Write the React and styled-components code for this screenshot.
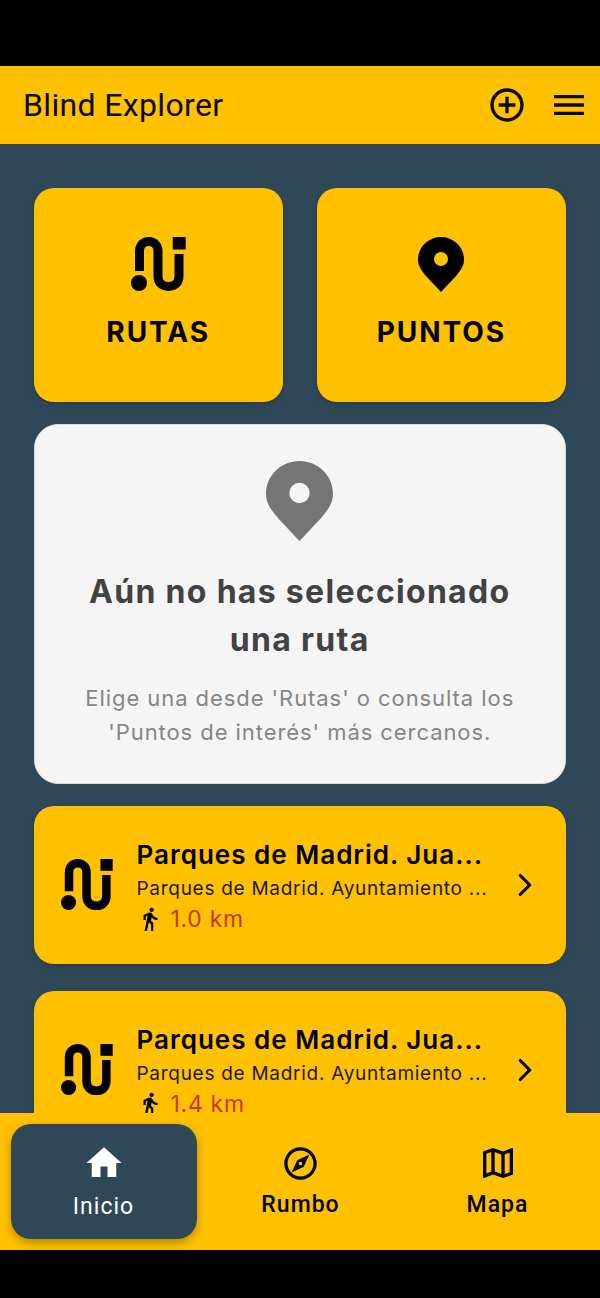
import React from "react";
import styled, { createGlobalStyle } from "styled-components";
import {
  MdOutlineAddCircleOutline,
  MdMenu,
  MdHome,
  MdOutlineExplore,
  MdOutlineMap,
  MdDirectionsWalk,
} from "react-icons/md";
import { LuChevronRight } from "react-icons/lu";

const AMBER = "#ffc100";
const SLATE = "#2f4858";

const GlobalStyle = createGlobalStyle`
  html, body { margin: 0; padding: 0; background: #000; }
  * { box-sizing: border-box; }
`;

const Screen = styled.div`
  width: 600px;
  height: 1298px;
  padding: 66px 0 48px;
  display: flex;
  flex-direction: column;
  background: #000;
  font-family: Inter, "Liberation Sans", sans-serif;
`;

const AppBar = styled.header`
  height: 78px;
  flex: none;
  display: flex;
  align-items: center;
  padding: 0 11px 0 23px;
  background: ${AMBER};
  color: #0a0a0a;
`;

const AppTitle = styled.h1`
  flex: 1;
  margin: 0;
  font-family: Roboto, sans-serif;
  font-size: 32px;
  font-weight: 400;
  letter-spacing: 0.35px;
`;

const BarActions = styled.div`
  display: flex;
  align-items: center;
  gap: 22px;
  font-size: 0;
`;

const Main = styled.main`
  flex: 1;
  min-height: 0;
  overflow: hidden;
  display: flex;
  flex-direction: column;
  padding: 44px 34px 0 33.5px;
  background: ${SLATE};
`;

const TileRow = styled.div`
  display: grid;
  grid-template-columns: 1fr 1fr;
  gap: 34px;
  flex: none;
`;

const Tile = styled.button`
  height: 214px;
  border: 0;
  border-radius: 20px;
  padding: 49px 0 0;
  display: flex;
  flex-direction: column;
  align-items: center;
  gap: 24px;
  background: ${AMBER};
  color: #000;
  box-shadow: 0 2px 5px rgba(0, 0, 0, 0.2);
  font-family: inherit;
`;

const TileLabel = styled.span`
  font-size: 28px;
  line-height: 33px;
  font-weight: 700;
  letter-spacing: 1.95px;
`;

const EmptyCard = styled.section`
  flex: none;
  height: 360px;
  margin-top: 22px;
  padding: 36px 30px 0;
  display: flex;
  flex-direction: column;
  align-items: center;
  border-radius: 24px;
  border: 1px solid #d9dadb;
  background: #f5f5f5;
  text-align: center;
`;

const EmptyTitle = styled.h2`
  margin: 27px 0 0;
  font-size: 32px;
  line-height: 48px;
  font-weight: 700;
  letter-spacing: 1.3px;
  color: #424242;
`;

const EmptyText = styled.p`
  margin: 18px 0 0;
  font-size: 22px;
  line-height: 33.5px;
  letter-spacing: 0.93px;
  color: #858585;
`;

const RouteList = styled.div`
  flex: none;
  display: flex;
  flex-direction: column;
  gap: 27px;
  margin-top: 22px;
`;

const RouteCard = styled.article`
  height: 158px;
  display: flex;
  align-items: center;
  padding: 0 22px 0 27.5px;
  border-radius: 20px;
  background: ${AMBER};
  color: #000;
  box-shadow: 0 2px 5px rgba(0, 0, 0, 0.2);
`;

const RouteBody = styled.div`
  flex: 1;
  min-width: 0;
  margin: 0 22px 0 23.5px;
`;

const RouteName = styled.div`
  white-space: nowrap;
  font-size: 26px;
  line-height: 32px;
  font-weight: 600;
  letter-spacing: 1px;
  margin-top: 4px;
`;

const RouteOwner = styled.div`
  margin-top: 5px;
  white-space: nowrap;
  font-size: 19px;
  line-height: 26px;
  letter-spacing: 0.72px;
  color: #1a1a1a;
`;

const RouteDistance = styled.div`
  display: flex;
  align-items: center;
  gap: 8px;
  margin-top: 1px;
  font-size: 23px;
  line-height: 32px;
  letter-spacing: 0.7px;
  color: #c9371a;
`;

const WalkIcon = styled(MdDirectionsWalk)`
  color: #000;
`;

const BottomNav = styled.nav`
  height: 137px;
  flex: none;
  display: grid;
  grid-template-columns: repeat(3, 197px);
  padding: 11px 0 11px 5px;
  background: ${AMBER};
`;

const NavItem = styled.a`
  display: flex;
  flex-direction: column;
  align-items: center;
  padding-top: 19px;
  width: 186px;
  justify-self: center;
  border-radius: 20px;
  font-family: Roboto, sans-serif;
  font-size: 23px;
  font-weight: ${(p) => (p.$active ? 400 : 500)};
  letter-spacing: 1px;
  color: ${(p) => (p.$active ? "#fff" : "#000")};
  background: ${(p) => (p.$active ? SLATE : "transparent")};
  box-shadow: ${(p) => (p.$active ? "0 4px 10px rgba(0, 0, 0, 0.28)" : "none")};
`;

const NavIcon = styled.span`
  height: 40px;
  display: flex;
  align-items: center;
  justify-content: center;
`;

const NavLabel = styled.span`
  margin-top: ${(p) => (p.$active ? 10 : 8)}px;
  line-height: 28px;
`;

function RouteGlyph({ size = 55 }) {
  return (
    <svg width={size} height={size} viewBox="0 0 55 55" style={{ flex: "none" }}>
      <path
        d="M8.5 34V14C8.5 8.5 12.5 4.5 17.75 4.5S27 8.5 27 14V39C27 45.5 31 49.5 37.5 49.5S48 45.5 48 39V17"
        fill="none"
        stroke="#000"
        strokeWidth="9"
      />
      <rect x="41.7" y="0" width="13" height="12.5" fill="#000" />
      <circle cx="8" cy="46" r="8" fill="#000" />
    </svg>
  );
}

function PinGlyph({ width = 46, color = "#000", hole = 7 }) {
  return (
    <svg width={width} height={width * 55 / 46} viewBox="0 0 46 55">
      <path
        fillRule="evenodd"
        fill={color}
        d={`M23 0C35.7 0 46 10 46 22.5C46 29.5 42 34 38 39L23 55L8 39C4 34 0 29.5 0 22.5C0 10 10.3 0 23 0ZM23 ${22 - hole}A${hole} ${hole} 0 1 0 23 ${22 + hole}A${hole} ${hole} 0 1 0 23 ${22 - hole}Z`}
      />
    </svg>
  );
}

const routes = [
  { id: 1, distance: "1.0 km" },
  { id: 2, distance: "1.4 km" },
];

export default function App() {
  return (
    <>
      <GlobalStyle />
      <Screen>
        <AppBar>
          <AppTitle>Blind Explorer</AppTitle>
          <BarActions>
            <MdOutlineAddCircleOutline size={40} />
            <MdMenu size={40} />
          </BarActions>
        </AppBar>
        <Main>
          <TileRow>
            <Tile>
              <RouteGlyph />
              <TileLabel>RUTAS</TileLabel>
            </Tile>
            <Tile>
              <PinGlyph />
              <TileLabel>PUNTOS</TileLabel>
            </Tile>
          </TileRow>
          <EmptyCard>
            <PinGlyph width={67} color="#757575" />
            <EmptyTitle>Aún no has seleccionado una ruta</EmptyTitle>
            <EmptyText>Elige una desde 'Rutas' o consulta los 'Puntos de interés' más cercanos.</EmptyText>
          </EmptyCard>
          <RouteList>
            {routes.map((r) => (
              <RouteCard key={r.id}>
                <RouteGlyph size={52} />
                <RouteBody>
                  <RouteName>Parques de Madrid. Jua...</RouteName>
                  <RouteOwner>Parques de Madrid. Ayuntamiento ...</RouteOwner>
                  <RouteDistance>
                    <WalkIcon size={26} />
                    {r.distance}
                  </RouteDistance>
                </RouteBody>
                <LuChevronRight size={38} strokeWidth={2} />
              </RouteCard>
            ))}
          </RouteList>
        </Main>
        <BottomNav>
          <NavItem $active>
            <NavIcon><MdHome size={42} /></NavIcon>
            <NavLabel $active>Inicio</NavLabel>
          </NavItem>
          <NavItem>
            <NavIcon><MdOutlineExplore size={39} /></NavIcon>
            <NavLabel>Rumbo</NavLabel>
          </NavItem>
          <NavItem>
            <NavIcon><MdOutlineMap size={40} /></NavIcon>
            <NavLabel>Mapa</NavLabel>
          </NavItem>
        </BottomNav>
      </Screen>
    </>
  );
}
